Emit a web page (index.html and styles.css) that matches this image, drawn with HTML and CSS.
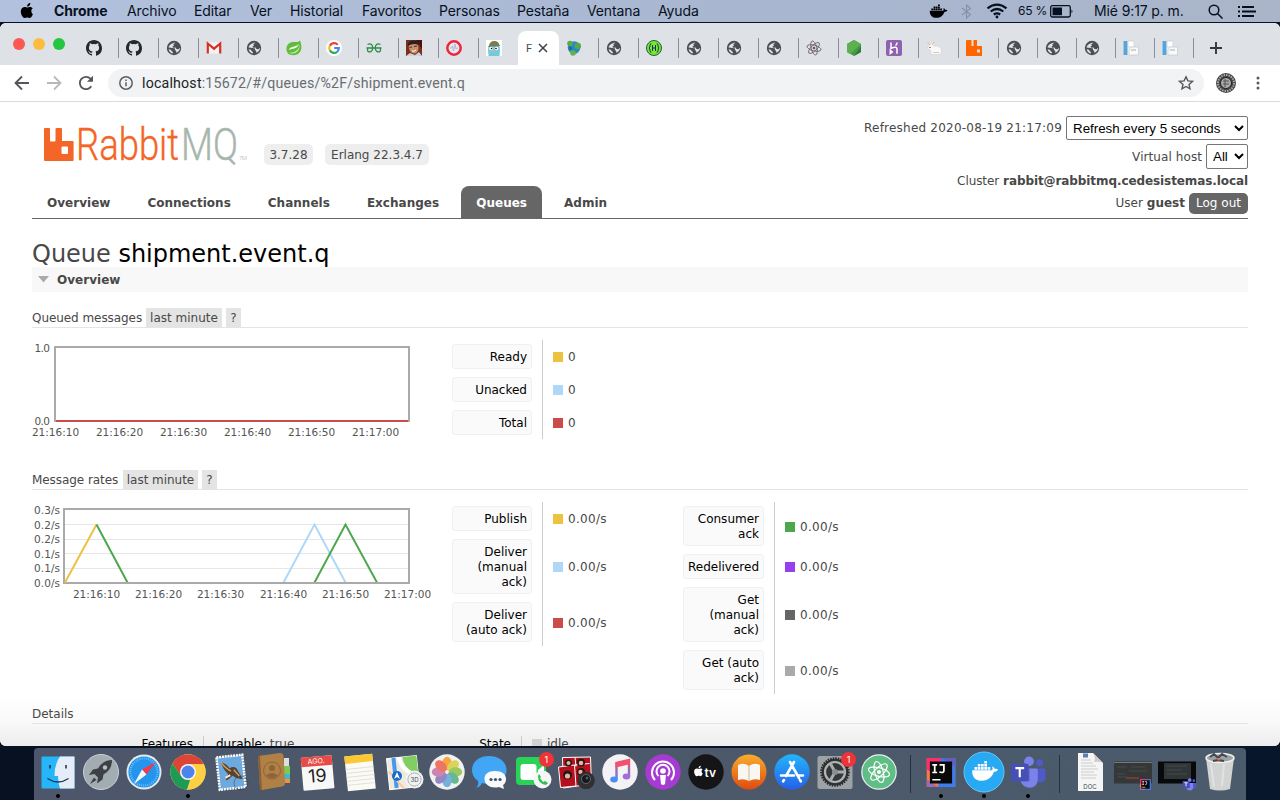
FILE: index.html
```html
<!DOCTYPE html>
<html lang="es">
<head>
<meta charset="utf-8">
<title>RabbitMQ Management</title>
<link rel="stylesheet" href="styles.css">
</head>
<body>
<svg class="defs" width="0" height="0">
  <symbol id="globe" viewBox="0 0 16 16"><circle cx="8" cy="8" r="7.200" fill="#4b4f53"/><path d="M9.500 2.800 7.200 4.300l.8 1.300-1.500.9.600 1.300 2.400-.2 1 1.500 2.300.2 1-1.200.4.500c-.6 2.400-2.200 3.800-4.100 4.200l.2-1.900-1.400-.9.2-1.400L6.500 7.900 2.600 7.500C3 5.200 6 2.600 9.500 2.800z" fill="#dee1e6"/><path d="M2.600 9.200 5 9.700l.7 1.600 1.300.8-.3 1.300C4.500 12.900 3 11.500 2.600 9.200z" fill="#dee1e6"/></symbol>
  <symbol id="github" viewBox="0 0 16 16"><path fill="#24292e" d="M8 0C3.580 0 0 3.580 0 8c0 3.540 2.290 6.530 5.470 7.590.4.070.55-.17.55-.38v-1.340c-2.230.48-2.700-1.070-2.700-1.070-.36-.92-.89-1.170-.89-1.170-.73-.5.05-.49.05-.49.81.06 1.230.83 1.230.83.72 1.230 1.880.87 2.340.67.07-.52.28-.87.51-1.070-1.780-.2-3.640-.89-3.640-3.950 0-.87.31-1.590.82-2.150-.08-.2-.36-1.020.08-2.120 0 0 .67-.21 2.200.82a7.600 7.600 0 0 1 4 0c1.530-1.040 2.200-.82 2.200-.82.44 1.100.16 1.920.08 2.120.51.56.82 1.270.82 2.150 0 3.070-1.870 3.750-3.650 3.950.29.25.54.73.54 1.480v2.200c0 .21.15.46.55.38A8 8 0 0 0 16 8c0-4.420-3.580-8-8-8z"/></symbol>
  <symbol id="page" viewBox="0 0 16 16"><path d="M.5 1h11v14H.5z" fill="#eef3f7"/><path d="M.5 1h4v14h-4z" fill="#55a5d6"/><path d="M5 1h6v6H5z" fill="#fff" stroke="#c5ccd2" stroke-width=".7"/><path d="M8 7h7.500v8H6V10z" fill="#fafafa" stroke="#c5c9cd" stroke-width=".7"/><path d="M8 10h5" stroke="#aaa"/></symbol>
  <symbol id="rabbit" viewBox="0 0 16 16"><path d="M1 0h4q.5 0 .5.500V6h2V.5Q7.500 0 8 0h2.500q.5 0 .5.500V6h4.500q.5 0 .5.500v9q0 .5-.5.500H.5q-.5 0-.5-.5V1Q0 0 1 0zM11 9.500v3h3v-3z" fill="#f60" fill-rule="evenodd"/></symbol>
  <symbol id="whale" viewBox="0 0 24 18"><path d="M1 8h17c.8-1 .6-2.300 0-3 1-.5 2 .5 2.300 1.800 1.200-.3 2.300 0 2.900.5-.6 1.500-2 2-3.500 2C18 14 14.500 17 9.500 17 4 17 .8 14 1 8zM3 5.200h2.300v2.200H3zM5.800 5.200h2.300v2.200H5.800zM8.600 5.200h2.300v2.200H8.600zM11.400 5.200h2.300v2.200h-2.300zM5.800 2.600h2.300v2.200H5.800zM8.600 2.600h2.300v2.200H8.600zM11.400 2.600h2.300v2.200h-2.300zM11.400 0h2.300v2.200h-2.300zM14.200 5.200h2.300v2.200h-2.300z"/></symbol>
  <symbol id="apple" viewBox="0 0 14 17"><path d="M11.300 9c0-1.700 1.400-2.600 1.500-2.700-.9-1.300-2.200-1.400-2.600-1.400-1.200-.1-2.200.7-2.800.7-.6 0-1.500-.7-2.400-.6C2.600 5 .8 6.500.8 9.500c0 3 2.200 6.500 3.900 6.500.9 0 1.300-.6 2.500-.6s1.500.6 2.500.6c1.500 0 2.900-2.700 3.300-3.900-.1 0-1.700-.8-1.700-3.100zM9.500 3.500C10 2.900 10.400 2 10.300 1 9.400 1 8.400 1.600 7.900 2.200c-.5.600-.9 1.500-.8 2.300.9.100 1.900-.4 2.400-1z"/></symbol>
  <symbol id="atomorbits" viewBox="-10 -10 20 20"><g fill="none" stroke="currentColor"><ellipse rx="9" ry="3.500" transform="rotate(15)"/><ellipse rx="9" ry="3.500" transform="rotate(75)"/><ellipse rx="9" ry="3.500" transform="rotate(135)"/></g><circle r="1.700" fill="currentColor"/></symbol>
  <symbol id="teams" viewBox="0 0 36 34"><circle cx="29.500" cy="7" r="3.600" fill="#5059c9"/><path d="M24 13h10q1.500 0 1.500 1.500V22c0 6-8 7-10 2z" fill="#5059c9"/><circle cx="18.500" cy="5.500" r="5" fill="#7b83eb"/><path d="M11 13h15q1.500 0 1.500 1.500V24c0 12-17 11-18 0z" fill="#7b83eb"/><path d="M12 13h7v13h-8z" fill="#5a62c3"/><rect y="8" width="18" height="18" rx="1.500" fill="#464eb8"/><path d="M4.500 12.500h9M9 12.500V22" stroke="#fff" stroke-width="2.200"/></symbol>
  <symbol id="idea" viewBox="0 0 30 30"><path d="M0 0h30v30H0z" fill="#f97a42"/><path d="M0 0h18L8 16 0 12z" fill="#fe2e6d"/><path d="M15 0h15v30H12z" fill="#3c7df2"/><path d="M15 0h15v9z" fill="#5f5fc8"/><path d="M0 22 12 30H0z" fill="#9b6bb5"/><path d="M3.500 3.500h23v23h-23z" fill="#090909"/><path d="M6 7h5M8.500 7v8M6 15h5M13.500 7H18v6q0 2-2 2t-2.500-1M6 22.500h8.500" fill="none" stroke="#fff" stroke-width="1.800"/></symbol>
</svg>

<header class="menubar">
  <svg class="apple-logo" width="14" height="17"><use href="#apple"/></svg>
  <nav class="menus"><b>Chrome</b><span>Archivo</span><span>Editar</span><span>Ver</span><span>Historial</span><span>Favoritos</span><span>Personas</span><span>Pestaña</span><span>Ventana</span><span>Ayuda</span></nav>
  <div class="status">
    <svg width="19" height="15"><use href="#whale"/></svg>
    <svg class="bluetooth" width="11" height="15" viewBox="0 0 11 15"><path d="M1 4 9.500 10.500 5.500 14V1l4 3.500L1 11"/></svg>
    <svg class="wifi" width="22" height="16" viewBox="0 0 22 16"><path d="M1.500 5.300q9.500-7.500 19 0M4.700 8.500q6.300-5 12.600 0M7.800 11.500q3.200-2.300 6.400 0"/><circle cx="11" cy="14" r="1.400"/></svg>
    <span class="percent">65 %</span>
    <svg class="battery" width="24" height="13" viewBox="0 0 24 13"><rect x=".7" y=".7" width="19.600" height="11.300" rx="1.800"/><path class="fill" d="M2.500 2.500h9.500v7.700H2.500zM21.500 4.500q2 1.800 0 3.700z"/></svg>
    <span class="clock">Mié 9:17 p. m.</span>
    <svg class="search" width="15" height="15" viewBox="0 0 15 15"><circle cx="6" cy="6" r="4.800"/><path d="m9.500 9.500 5 5"/></svg>
    <svg class="list" width="18" height="11" viewBox="0 0 18 11"><path d="M0 1h2M4 1h12M0 5.500h2M4 5.500h14M0 10h2M4 10h12"/></svg>
  </div>
</header>

<main class="window">
  <div class="tabstrip">
    <div class="lights"><i class="red"></i><i class="amber"></i><i class="green"></i></div>
    <div class="tab"><svg><use href="#github"/></svg></div>
    <div class="tab"><svg><use href="#github"/></svg></div>
    <div class="tab"><svg><use href="#globe"/></svg></div>
    <div class="tab"><svg viewBox="0 0 16 16"><path d="M1 2.500h14v11H1z" fill="#f3f3f3"/><path d="M1.800 13.500V3.500L8 8.700l6.200-5.200v10" fill="none" stroke="#d93025" stroke-width="2.200"/></svg></div>
    <div class="tab"><svg><use href="#globe"/></svg></div>
    <div class="tab"><svg viewBox="0 0 16 16"><path d="M14 .5c2 5 2 9-.5 12C11 16 4.500 15.800 2 13.500-1 9.500.5 4 4.500 2.500c3-1 7.500.5 9.500-2z" fill="#5fbd3a"/><path d="M3 12.800c5 .2 9.500-1.500 11-8.300C13.500 11 9 15 3 12.800zM2.800 10.300C4 5.500 10 8 13 3.500 11.500 9.500 7 8 2.800 10.300z" fill="#eef7e9"/></svg></div>
    <div class="tab"><svg viewBox="0 0 16 16"><circle cx="8" cy="8" r="8" fill="#fff"/><g fill="none" stroke-width="2.200"><path d="M11.700 4.700A4.800 4.800 0 0 0 3.800 5.800" stroke="#ea4335"/><path d="M3.800 5.800a4.800 4.800 0 0 0 0 4.500" stroke="#fbbc05"/><path d="M3.800 10.300a4.800 4.800 0 0 0 7.500 1.400" stroke="#34a853"/><path d="M11.300 11.700A4.800 4.800 0 0 0 12.800 8H8.200" stroke="#4285f4"/></g></svg></div>
    <div class="tab"><svg viewBox="0 0 16 16"><g fill="none" stroke="#2f8d46" stroke-width="1.300"><path d="M1.500 4.500C5 2.800 6.800 5 6.800 8s-2.800 5-5 3.200L1.200 8H8M14.500 4.500C11 2.800 9.200 5 9.200 8s2.800 5 5 3.200L14.800 8H8"/></g></svg></div>
    <div class="tab"><svg viewBox="0 0 16 16"><path d="M0 0h16v16H0z" fill="#7d2f1d"/><path d="M10 0h6v9z" fill="#4b120f"/><ellipse cx="7.500" cy="7.500" rx="4.800" ry="6.300" fill="#c9906c" transform="rotate(-15 7 7)"/><path d="M1.500 6Q2 .5 7.500.5T12.500 5Q8 2.500 1.500 6z" fill="#29211f"/><path d="M3.500 7.500 6 7M8 6.500 11 6" stroke="#40302c"/><path d="m0 16 4-3 5 2 4-3 3 4z" fill="#cbd2df"/><path d="M6 11q2 1 4-1" stroke="#fff" fill="none"/></svg></div>
    <div class="tab"><svg viewBox="0 0 16 16"><circle cx="8" cy="8" r="6.700" fill="#e5e8ef" stroke="#ef2440" stroke-width="2.500"/><path d="M4 8h1.500l1-2 1 5L9 4l1 5 1-1h1" fill="none" stroke="#a5b0ca" stroke-width=".8"/></svg></div>
    <div class="tab bare"><svg viewBox="0 0 16 16"><path d="M0 0h16v16H0z" fill="#fff"/><path d="M2.500 16 2 9q0-5 6-5t6 5l-.5 7z" fill="#6fcbdd"/><path d="M3 5.500Q4 .5 9 1q4 .5 4 3.500l1.500 1.500L2 7z" fill="#7b7b51"/><circle cx="5" cy="8.500" r="1.800" fill="#fff"/><circle cx="10.500" cy="8.500" r="1.800" fill="#fff"/><circle cx="5.500" cy="8.500" r=".8"/><circle cx="10" cy="8.500" r=".8"/><path d="M6.500 10.500h2.500v2H6.500z" fill="#d7b48a"/></svg></div>
    <div class="tab active"><span>F</span><svg viewBox="0 0 10 10"><path d="m1 1 8 8M9 1 1 9" stroke="#3c4043" stroke-width="1.500"/></svg></div>
    <div class="tab"><svg viewBox="0 0 16 16"><circle cx="8" cy="7.500" r="6.300" fill="#2588ce"/><circle cx="4" cy="3.500" r="2.800" fill="#5fa848"/><circle cx="11.800" cy="6" r="3.200" fill="#57a647"/><circle cx="7" cy="13" r="2.800" fill="#69b048"/><path d="M3 6.500 5.500 7 6 10 3.500 9.500z" fill="#1e6b72"/></svg></div>
    <div class="tab"><svg><use href="#globe"/></svg></div>
    <div class="tab"><svg viewBox="0 0 16 16"><circle cx="8" cy="8" r="7.500" fill="#79e53b" stroke="#265f36"/><path d="M5.300 3.500Q4 3.500 4 5.500T3 8q1 .5 1 2.500t1.300 2M10.700 3.500q1.300 0 1.300 2T13 8q-1 .5-1 2.500t-1.300 2M6.500 5v6M9.500 5v6M6.500 8h3" fill="none" stroke="#173647"/></svg></div>
    <div class="tab"><svg><use href="#globe"/></svg></div>
    <div class="tab"><svg><use href="#globe"/></svg></div>
    <div class="tab"><svg><use href="#globe"/></svg></div>
    <div class="tab atom"><svg><use href="#atomorbits"/></svg></div>
    <div class="tab"><svg viewBox="0 0 16 16"><path d="m8 0 7 4v8l-7 4-7-4V4z" fill="#469b43"/><path d="m8 0 7 4L4 14l-3-2V4z" fill="#5daf50"/><path d="m8 16 7-4V6z" fill="#2f7a38"/></svg></div>
    <div class="tab"><svg viewBox="0 0 16 16"><rect width="16" height="16" rx="2" fill="#8e62ae"/><path d="M5 2.500v5.700q6-2.200 6 .5v5M11 2.500q0 2-1.500 3M4.300 10.200v3.300l2-1.600z" fill="none" stroke="#fff" stroke-width="1.500"/></svg></div>
    <div class="tab"><svg viewBox="0 0 16 16"><path d="M.5 1.500Q3 1 4.800 4.500 6 1 8.500.8 9 4 7.500 6.500c4-1.500 8 .5 8 4.500q0 3.500-3 3.500H5.500q-1.500-1.500-.5-4-4.500-1-2.500-5z" fill="#faf9f8" stroke="#cfcac8" stroke-width=".5"/><path d="m2 2.500 2 3M7.800 2 6.300 5" stroke="#efa2a0"/><circle cx="4" cy="7.500" r=".6"/><path d="M7 12.500h6" stroke="#d0cdc3"/></svg></div>
    <div class="tab"><svg><use href="#rabbit"/></svg></div>
    <div class="tab slim"><svg><use href="#globe"/></svg></div>
    <div class="tab slim"><svg><use href="#globe"/></svg></div>
    <div class="tab slim"><svg><use href="#globe"/></svg></div>
    <div class="tab slim"><svg><use href="#page"/></svg></div>
    <div class="tab slim"><svg><use href="#page"/></svg></div>
    <svg class="newtab" viewBox="0 0 12 12"><path d="M6 0v12M0 6h12" stroke="#35383b" stroke-width="1.900"/></svg>
  </div>

  <div class="toolbar">
    <svg class="nav-icon" viewBox="0 0 16 16"><path d="M15 8H2M8 1.500 1.500 8 8 14.500"/></svg>
    <svg class="nav-icon dim" viewBox="0 0 16 16"><path d="M1 8h13M8 1.500 14.500 8 8 14.500"/></svg>
    <svg class="nav-icon" viewBox="0 0 16 16"><path d="M13.300 11.300A6.200 6.200 0 1 1 12.500 3.700L14 5.200"/><path class="solid" d="M15 .8v6H9z"/></svg>
    <div class="address">
      <svg class="info" viewBox="0 0 14 14"><circle cx="7" cy="7" r="6.200"/><path d="M7 6.200v4M7 3.500v1.600"/></svg>
      <span class="url"><b>localhost</b>:15672/#/queues/%2F/shipment.event.q</span>
      <svg class="star" viewBox="0 0 16 16"><path d="m8 1.800 1.900 4.100 4.500.5L11 9.400l1 4.400-4-2.300-4 2.300 1-4.400-3.400-3 4.500-.5z"/></svg>
    </div>
    <svg class="avatar" viewBox="0 0 22 22"><circle cx="11" cy="11" r="10" fill="#444"/><circle cx="11" cy="11" r="8" fill="none" stroke="#aaa" stroke-width="2" stroke-dasharray="1.500 1"/><circle cx="11" cy="11" r="5.500" fill="#aaa" stroke="#222"/><path d="M8 9h6M8 12h6M10 7v8" stroke="#555"/></svg>
    <svg class="dots" viewBox="0 0 4 14"><circle cx="2" cy="2" r="1.500"/><circle cx="2" cy="7" r="1.500"/><circle cx="2" cy="12" r="1.500"/></svg>
  </div>

  <div class="page">
    <header class="page-head">
      <div class="brand">
        <svg class="logo" width="216" height="54" viewBox="0 0 216 54">
          <path d="M13 5h4q1 0 1 1v11.500q0 1 1 1h3.500q1 0 1-1V6q0-1 1-1H29q1 0 1 1v12h10.600q1 0 1 1v18q0 1-1 1H13q-1 0-1-1V6q0-1 1-1zM29.500 24.500v5.500q0 1 1 1h4.500q1 0 1-1v-5.500q0-1-1-1h-4.500q-1 0-1 1z" fill="#f36627" fill-rule="evenodd"/>
          <text x="44" y="37" class="rabbit-word" textLength="103" lengthAdjust="spacingAndGlyphs">Rabbit</text>
          <text x="149" y="37" class="mq-word" textLength="57" lengthAdjust="spacingAndGlyphs">MQ</text>
          <text x="207" y="37" class="tm" textLength="8">TM</text>
        </svg>
        <span class="pill version">3.7.28</span><span class="pill erlang">Erlang 22.3.4.7</span>
      </div>
      <nav class="sections"><a>Overview</a><a>Connections</a><a>Channels</a><a>Exchanges</a><a class="current">Queues</a><a>Admin</a></nav>
      <div class="session">
        <div class="refresh"><span>Refreshed 2020-08-19 21:17:09</span><select class="sel-refresh"><option>Refresh every 5 seconds</option></select></div>
        <div class="vhost"><span>Virtual host</span><select class="sel-host"><option>All</option></select></div>
        <div class="cluster"><span>Cluster</span><b>rabbit@rabbitmq.cedesistemas.local</b></div>
        <div class="user"><span>User</span><b>guest</b><button>Log out</button></div>
      </div>
    </header>

    <h1>Queue <b>shipment.event.q</b></h1>
    <h2><svg width="11" height="7"><path d="M0 0h11L5.500 6.500z" fill="#aaa"/></svg><span>Overview</span></h2>

    <h3 class="h-queued"><span class="title">Queued messages</span><span class="chip">last minute</span><span class="chip help">?</span></h3>
    <section class="stats first">
      <svg class="chart" width="420" height="100" viewBox="32 340 420 100">
        <rect x="55" y="347" width="354" height="74"/>
        <path d="M56 421h352" stroke="#cb4b4b"/>
        <g class="ylab"><text x="50" y="352" textLength="15.500">1.0</text><text x="50" y="425" textLength="15.500">0.0</text></g>
        <g class="xlab"><text x="55.500" y="436">21:16:10</text><text x="119.500" y="436">21:16:20</text><text x="183.500" y="436">21:16:30</text><text x="247.500" y="436">21:16:40</text><text x="311.500" y="436">21:16:50</text><text x="375.500" y="436">21:17:00</text></g>
      </svg>
      <div class="legend">
        <div class="row"><span class="key">Ready</span><span class="val"><i class="gold"></i>0</span></div>
        <div class="row"><span class="key">Unacked</span><span class="val"><i class="sky"></i>0</span></div>
        <div class="row"><span class="key">Total</span><span class="val"><i class="crimson"></i>0</span></div>
      </div>
    </section>

    <h3 class="h-rates"><span class="title">Message rates</span><span class="chip">last minute</span><span class="chip help">?</span></h3>
    <section class="stats second">
      <svg class="chart" width="420" height="100" viewBox="32 502 420 100">
        <path class="grid" d="M65 524.500h343M65 539.500h343M65 553.500h343M65 568.500h343"/>
        <rect x="64" y="509" width="345" height="74"/>
        <path d="M65 582.500 96.500 524.500" stroke="#edc240"/>
        <path d="M96.500 524.500 127.500 582.500" stroke="#4da74d"/>
        <path d="M283.500 582.500 314.500 524.500 345.500 582.500" stroke="#afd8f8"/>
        <path d="M314.500 582.500 345.500 524.500 377 582.500" stroke="#4da74d"/>
        <path d="M96 583h313" stroke="#aaa"/>
        <g class="ylab"><text x="60" y="514" textLength="26">0.3/s</text><text x="60" y="529" textLength="26">0.2/s</text><text x="60" y="543" textLength="26">0.2/s</text><text x="60" y="558" textLength="26">0.1/s</text><text x="60" y="572" textLength="26">0.1/s</text><text x="60" y="587" textLength="26">0.0/s</text></g>
        <g class="xlab"><text x="96.500" y="598">21:16:10</text><text x="158.500" y="598">21:16:20</text><text x="220.500" y="598">21:16:30</text><text x="283.500" y="598">21:16:40</text><text x="345.500" y="598">21:16:50</text><text x="407.500" y="598">21:17:00</text></g>
      </svg>
      <div class="legend">
        <div class="row"><span class="key">Publish</span><span class="val"><i class="gold"></i>0.00/s</span></div>
        <div class="row"><span class="key">Deliver<br>(manual<br>ack)</span><span class="val"><i class="sky"></i>0.00/s</span></div>
        <div class="row"><span class="key">Deliver<br>(auto ack)</span><span class="val"><i class="crimson"></i>0.00/s</span></div>
      </div>
      <div class="legend wide">
        <div class="row"><span class="key">Consumer<br>ack</span><span class="val"><i class="leaf"></i>0.00/s</span></div>
        <div class="row"><span class="key">Redelivered</span><span class="val"><i class="violet"></i>0.00/s</span></div>
        <div class="row"><span class="key">Get<br>(manual<br>ack)</span><span class="val"><i class="dark"></i>0.00/s</span></div>
        <div class="row"><span class="key">Get (auto<br>ack)</span><span class="val"><i class="grey"></i>0.00/s</span></div>
      </div>
    </section>

    <h3 class="h-details"><span class="title">Details</span></h3>
    <div class="facts">
      <span class="fact-key">Features</span><span class="fact-val"><b>durable:</b> true</span>
      <span class="fact-key state">State</span><span class="fact-val"><i></i>idle</span>
    </div>
  </div>
</main>

<footer class="dock">
  <div class="app running"><svg viewBox="-21 -24 42 52"><rect x="-16.500" y="-15.500" width="33" height="32" rx="1" fill="#25b5f8"/><path d="M2-15.500h14.500v32H2Q0 11 0 4h-3.500Q-3.500-8 2-15.500z" fill="#e6edf8"/><path d="M-8-7v3.500M8-7v3.500" stroke="#152c4b" stroke-width="1.500"/><path d="M-10.500 6.500q10.500 7 21 0" fill="none" stroke="#17375c" stroke-width="1.300"/></svg></div>
  <div class="app"><svg viewBox="-21 -24 42 52"><circle r="17.500" fill="#a3adb1" stroke="#cbd2d5"/><path d="M11-12Q2-12-3-3.500l-5 1-4 5.500 5.500-1L-3 5.500l-1 6L1.500 7.500l1-5Q11-2 11-12z" fill="#3c4145"/><path d="m-7 5.500-4 6.500 6.500-4z" fill="#3c4145"/><circle cx="4" cy="-4.500" r="2.200" fill="#b9c0c3"/></svg></div>
  <div class="app"><svg viewBox="-21 -24 42 52"><circle r="17.500" fill="#e7eaed"/><circle r="15.600" fill="#2395ec"/><circle r="13.500" fill="none" stroke="#9cdaff" stroke-width="2" stroke-dasharray=".6 1.500"/><path d="M12-10 2.500 2.500l-4.500-5z" fill="#f5394b"/><path d="M-10 12-2-2.500l4.500 5z" fill="#f3f5f6"/></svg></div>
  <div class="app running"><svg viewBox="-21 -24 42 52"><circle r="17.700" fill="#fdcf45"/><path d="M-15.500-8.500A17.700 17.700 0 0 1 15.700-8L0-8l-7 12z" fill="#dc4438"/><path d="M-15.500-8.500-7 4 2 8-1 17.600A17.700 17.700 0 0 1-15.500-8.500z" fill="#1c9b57"/><path d="M-1 17.600 7 4 7-8h8.700A17.700 17.700 0 0 1-1 17.600z" fill="#fdcf45"/><circle r="8" fill="#f5f5f5"/><circle r="6.500" fill="#4b84ed"/></svg></div>
  <div class="app"><svg viewBox="-21 -24 42 52"><g transform="rotate(-6)"><rect x="-13" y="-16" width="26" height="32.500" fill="#6ea9de" stroke="#fff" stroke-width="2.500" stroke-dasharray="2 .8"/><path d="M-9-11Q-4-9-1-4 3-6 6-3q2 5 5 11-6 0-10-4-3 3-7 4 0-3 3-6Q-8-4-9-11z" fill="#59422f"/><path d="M-9-11Q-5-4 0-1M3-2l5 7" stroke="#c99c62" stroke-width="1.500" fill="none"/><path d="m-6 5 5-2" stroke="#efe7d8" stroke-width="2"/></g><circle cx="10" cy="11" r="7" fill="none" stroke="#31465c" opacity=".55"/></svg></div>
  <div class="app"><svg viewBox="-21 -24 42 52"><path d="M10-14h5v8h-5z" fill="#ddd"/><path d="M10-6h6v8h-6z" fill="#7ec954"/><path d="M10 2h6v5h-6z" fill="#46b7ca"/><path d="M10 7h6v4h-6z" fill="#e9953c"/><path d="m-16-16 22-3q3 0 3.500 3L11 11q0 3-3 3.500l-20 3.500q-2 0-2-2z" fill="#b08047"/><path d="m-16-16 2 32q0 2 2 2L-14-16z" fill="#8c5f31"/><circle cx="-2" cy="-1.500" r="8.500" fill="none" stroke="#8d6337"/><circle cx="-2" cy="-4" r="3" fill="#8d6337"/><path d="M-8 3.500q6-5 12 0-6 5-12 0z" fill="#8d6337"/></svg></div>
  <div class="app"><svg viewBox="-21 -24 42 52"><g transform="rotate(-5)"><rect x="-15" y="-15.500" width="31" height="33" rx="1" fill="#f8f8f8"/><path d="M-15-15.500h31v9.500h-31z" fill="#e84a46"/><text class="month" x="0" y="-8.500" text-anchor="middle">AGO.</text><text class="day" x="0" y="10" text-anchor="middle">19</text></g></svg></div>
  <div class="app"><svg viewBox="-21 -24 42 52"><g transform="rotate(-6)"><rect x="-14" y="-17" width="28" height="35" fill="#fbfaf5"/><path d="M-14-17h28v7.500h-28z" fill="#fac832"/><path d="M-14-4h28M-14 0h28M-14 4h28M-14 8h28M-14 12h28" stroke="#dedbd1" stroke-width=".8"/></g></svg></div>
  <div class="app"><svg viewBox="-21 -24 42 52"><g transform="rotate(-6)"><rect x="-16" y="-15" width="30" height="31" fill="#eeeade" stroke="#fff"/><path d="M0-15h14v18Q0-2 0-15z" fill="#82ce62"/><path d="M-4-15q3 16 18 20" fill="none" stroke="#fff" stroke-width="4"/><path d="M-9-15V15" stroke="#4598ed" stroke-width="4"/><path d="m-15-2 13 18" stroke="#fac8a4" stroke-width="2"/></g><circle cx="-7" cy="4" r="5" fill="#176cca"/><path d="m-7 0 3 7-3-2-3 2z" fill="#fff"/><circle cx="10.500" cy="7.500" r="9" fill="#f2f2f2"/><circle cx="10.500" cy="7.500" r="6.500" fill="none" stroke="#456" stroke-width=".8" stroke-dasharray="1 1"/><text class="mini" x="10.500" y="9.700" text-anchor="middle">3D</text></svg></div>
  <div class="app"><svg viewBox="-21 -24 42 52"><circle r="17.700" fill="#f1f1ef"/><g opacity=".88"><ellipse cy="-8.500" rx="4.700" ry="6.800" fill="#f99b27"/><ellipse cy="-8.500" rx="4.700" ry="6.800" fill="#d9d043" transform="rotate(45)"/><ellipse cy="-8.500" rx="4.700" ry="6.800" fill="#93c34c" transform="rotate(90)"/><ellipse cy="-8.500" rx="4.700" ry="6.800" fill="#51b286" transform="rotate(135)"/><ellipse cy="-8.500" rx="4.700" ry="6.800" fill="#65a9dc" transform="rotate(180)"/><ellipse cy="-8.500" rx="4.700" ry="6.800" fill="#8979bd" transform="rotate(225)"/><ellipse cy="-8.500" rx="4.700" ry="6.800" fill="#c776a9" transform="rotate(270)"/><ellipse cy="-8.500" rx="4.700" ry="6.800" fill="#ee6551" transform="rotate(315)"/></g></svg></div>
  <div class="app"><svg viewBox="-21 -24 42 52"><path d="M-1-16c10 0 17.500 6 17.500 14S9 12-1 12q-4 0-7-1-2 4.500-6 4.500 3-2.500 2-6.500-6-4-6-11c0-8 7-14 17-14z" fill="#42a6f6"/><path d="M5-1c7 0 11 3 11 8q0 4-3 6l1 4-5-2C1 17-5.500 13-5.500 7c0-5 3.500-8 10.500-8z" fill="#fafafa"/><g fill="#355577"><circle cx="1" cy="7.500" r="1.600"/><circle cx="5.500" cy="7.500" r="1.600"/><circle cx="10" cy="7.500" r="1.600"/></g></svg></div>
  <div class="app"><svg viewBox="-21 -24 42 52"><rect x="-17" y="-15" width="30" height="28" rx="4" fill="#2ad255"/><rect x="-12.500" y="-8" width="16" height="16" rx="3" fill="#fff"/><path d="m5-2 6-5V6L5 2z" fill="#fff"/><circle cx="9.500" cy="7.500" r="9" fill="#f4f5f4"/><path d="M5 4q0 8 8 9l2-2-3-2-2 1-3-4 1-1-2-3z" fill="#2cc253"/></svg><span class="badge">1</span></div>
  <div class="app"><svg viewBox="-21 -24 42 52"><path d="m-13.500-14.500 28-.5 1 27-28 4z" fill="#b80f1c" stroke="#fff"/><path d="m-17.500-5 16-2 1.500 21-15.500 1.500z" fill="#b80f1c" stroke="#fff"/><path d="m-1.500-7 15-1.500M-1-14.500l1 9" stroke="#fff"/><g fill="#241719"><circle cx="-7.500" cy="-9" r="3.500"/><circle cx="5" cy="-9.500" r="4"/><circle cx="-8.500" cy="3" r="4.500"/><circle cx="5" cy="0" r="4"/></g><g fill="#e6b39b"><circle cx="-7.500" cy="-9" r="2"/><circle cx="5" cy="-9" r="2.300"/><circle cx="-8.500" cy="4" r="2.600"/><circle cx="4.500" cy="0" r="2.200"/></g><circle cx="10" cy="8.500" r="8.800" fill="#303033"/><circle cx="10" cy="7" r="4.500" fill="#15171b" stroke="#66666a"/><circle cx="11" cy="6" r="1.500" fill="#4d5679"/></svg></div>
  <div class="app"><svg viewBox="-21 -24 42 52"><circle r="17.700" fill="#f3f3f6"/><path d="M-3.500 7V-9L9-12V4" fill="none" stroke="url(#note)" stroke-width="2.400"/><path d="m-4.500-9.500 14.500-3.300v5L-4.500-4.500z" fill="#f4506b"/><ellipse cx="-6" cy="7.500" rx="3.800" ry="3" fill="#4d8df3"/><ellipse cx="6.500" cy="4.500" rx="3.800" ry="3" fill="#a46bdd"/><defs><linearGradient id="note" x2="0" y2="1"><stop stop-color="#f4506b"/><stop offset="1" stop-color="#5685f0"/></linearGradient></defs></svg></div>
  <div class="app"><svg viewBox="-21 -24 42 52"><circle r="17.700" fill="#a63ad2"/><path d="M-8 8a11 11 0 1 1 16 0M-4.500 4a6.500 6.500 0 1 1 9 0" fill="none" stroke="#fff" stroke-width="2"/><circle cy="-1" r="2.800" fill="#fff"/><path d="M-3 3h6l-1 9q-2 2-4 0z" fill="#fff"/></svg></div>
  <div class="app"><svg viewBox="-21 -24 42 52"><circle r="17.700" fill="#151517"/><use href="#apple" x="-12.500" y="-7" width="10" height="12" fill="#fff"/><text class="tv" x="-1.500" y="4.500">tv</text></svg></div>
  <div class="app"><svg viewBox="-21 -24 42 52"><defs><linearGradient id="books" x2="0" y2="1"><stop stop-color="#f9ad2c"/><stop offset="1" stop-color="#df4b10"/></linearGradient></defs><circle r="17.500" fill="url(#books)"/><path d="M0-6Q-5-10-11-7V8q6-2 11 1 5-3 11-1V-7Q5-10 0-6z" fill="#faf7f2"/><path d="M0-6V9" stroke="#c8b6a2"/></svg></div>
  <div class="app"><svg viewBox="-21 -24 42 52"><defs><linearGradient id="store" x2="0" y2="1"><stop stop-color="#22b5fa"/><stop offset="1" stop-color="#2660ea"/></linearGradient></defs><circle r="17.700" fill="url(#store)"/><path d="M2-10-6 4M-2-10 7 6M-11 3.500H2M7 3.500h4M-8 8l-.8 1.300M8 8l.8 1.300" fill="none" stroke="#fff" stroke-width="2.600" stroke-linecap="round"/></svg></div>
  <div class="app"><svg viewBox="-21 -24 42 52"><rect x="-17.500" y="-16" width="35" height="33" rx="2" fill="#9da2a5"/><circle r="13.300" fill="#33383b" stroke="#282b2e" stroke-width="3" stroke-dasharray="1.500 1"/><circle r="10" fill="none" stroke="#b5b5b5" stroke-width="2.200"/><path d="M0 0-5-9M0 0-5 9M0 0h10" stroke="#a9abac" stroke-width="3"/><circle r="3" fill="#8b8e90"/></svg><span class="badge">1</span></div>
  <div class="app atom-app"><svg viewBox="-21 -24 42 52"><circle r="17.200" fill="#5fbd86" stroke="#e9efec" stroke-width="1.200"/><use href="#atomorbits" x="-12" y="-12" width="24" height="24"/></svg></div>
  <i class="divider"></i>
  <div class="app running"><svg viewBox="-21 -24 42 52"><use href="#idea" x="-14.500" y="-14" width="29" height="29"/></svg></div>
  <div class="app running"><svg viewBox="-21 -24 42 52"><circle r="20" fill="#27a9f3" stroke="#66c7f2"/><use href="#whale" x="-13.500" y="-11" width="29" height="21" fill="#fff"/></svg></div>
  <div class="app running"><svg viewBox="-21 -24 42 52"><use href="#teams" x="-17" y="-16.500" width="35" height="34"/></svg></div>
  <i class="divider"></i>
  <div class="app"><svg viewBox="-21 -24 42 52"><path d="M-12-19H3L13-9v28h-25z" fill="#f5f5f5"/><path d="M3-19q3 5 1 9 5-1 9 1z" fill="#ccc"/><path d="M-9-12h10M-9-9h12M-9-6h15M-9-3h17M-9 0h13M-9 3h16M-9 6h15" stroke="#bbb" stroke-width=".7"/><path d="M-7-18.500h5v4h-5z" fill="#5a7eb6"/><text class="mini doc" y="17" text-anchor="middle">DOC</text></svg></div>
  <div class="app"><svg viewBox="-21 -24 42 52"><rect x="-19" y="-10.500" width="38" height="22" fill="#343938"/><path d="M-19-9.500h38" stroke="#777"/><path d="M-16-5h10M-2-5h14M-4-1h18M-16 2h8M-16 5h10" stroke="#444c50"/><path d="M-7 6h13" stroke="#743b3b" stroke-width="2"/><use href="#idea" x="7" y="7" width="11" height="11"/></svg></div>
  <div class="app"><svg viewBox="-21 -24 42 52"><rect x="-19" y="-10.500" width="38" height="22" fill="#08090a"/><path d="M-13-9h27V7h-27z" fill="#303637"/><path d="M-10-6h20M-10-2h15M-10 2h20" stroke="#434b50"/><use href="#teams" x="5" y="6" width="15" height="13"/></svg></div>
  <div class="app"><svg viewBox="-21 -24 42 52"><path d="M-14-14h28l-4 31q-10 3-20 0z" fill="#d2d3d3"/><ellipse cy="-14" rx="14" ry="4.500" fill="#9ea2a4" stroke="#f0f0f0" stroke-width="1.500"/><path d="m-10-15 4-3 4 4 4-4 5 3M-7-11l5-1 6 1" stroke="#434950" fill="none" stroke-width="2"/><path d="m-9-8 3 23M4-8 2 14" stroke="#ececec" stroke-width="2" opacity=".6"/><path d="m-4-14 3 3 2-3" fill="#dd735c"/></svg></div>
</footer>
</body>
</html>
```

FILE: styles.css
```css
* { box-sizing: border-box; }
body {
  margin: 0;
  width: 1280px;
  height: 800px;
  overflow: hidden;
  display: flex;
  flex-direction: column;
  background: linear-gradient(90deg, #081122, #07162a);
  font-family: "DejaVu Sans", sans-serif;
}
i { font-style: normal; }
.defs { position: absolute; }

/* macOS menu bar */
.menubar {
  flex: none;
  height: 22px;
  margin-bottom: 1px;
  padding-left: 20px;
  display: flex;
  align-items: center;
  background: linear-gradient(90deg, #b2c1dd, #a8b6d0 60%, #aab5c9);
  color: #071020;
  font: 14px/22px Inter, sans-serif;
  letter-spacing: -.12px;
}
.apple-logo { margin: -2px 20px 0 0; }
.menus { display: grid; grid-template-columns: 73px 67px 56px 40px 72px 77px 78px 70px 71px 60px; }
.status { margin-left: auto; display: flex; align-items: center; width: 351px; }
.status svg { flex: none; }
.bluetooth { margin-left: 13px; fill: none; stroke: #8490a7; stroke-width: 1.100; }
.wifi { margin-left: 14px; fill: none; stroke: #071020; stroke-width: 2.200; }
.wifi circle { fill: #071020; stroke: none; }
.percent { width: 32px; margin-left: 10px; font-size: 12px; letter-spacing: -.2px; white-space: nowrap; }
.battery { fill: none; stroke: #071020; stroke-width: 1.300; }
.battery .fill { fill: #071020; stroke: none; }
.clock { width: 93px; margin-left: 20px; white-space: nowrap; }
.search { margin-left: 21px; fill: none; stroke: #071020; stroke-width: 1.500; }
.list { margin-left: 15px; stroke: #071020; stroke-width: 1.800; }

/* browser window */
.window {
  flex: none;
  height: 723px;
  display: flex;
  flex-direction: column;
  border-radius: 6px;
  overflow: hidden;
  background: #fff;
}
.tabstrip { flex: none; height: 42px; display: flex; background: #dee1e6; }
.lights { width: 79px; padding: 15px 0 0 13px; display: flex; gap: 8px; }
.lights i { width: 12px; height: 12px; border-radius: 50%; }
.lights .red { background: #fc5753; }
.lights .amber { background: #fdbc40; }
.lights .green { background: #22c73f; }
.tab {
  flex: none;
  width: 40px;
  height: 20px;
  margin-top: 15px;
  padding: 2px 0 0 7px;
  border-right: 1px solid #8b8e93;
}
.tab svg { display: block; width: 16px; height: 16px; }
.tab.slim { width: 39px; }
.tab.bare { width: 39px; border: 0; }
.tab.atom { color: #66595c; }
.tab.active {
  width: 41px;
  height: 34px;
  margin-top: 8px;
  padding: 0 0 0 8px;
  display: flex;
  align-items: center;
  border: 0;
  border-radius: 8px 8px 0 0;
  background: #fff;
  font: 11px Roboto, sans-serif;
  color: #45494d;
}
.tab.active span { width: 6px; }
.tab.active svg { width: 10px; height: 10px; margin-left: 6px; }
.newtab { width: 12px; height: 12px; margin: 19px 0 0 16px; }
.toolbar {
  flex: none;
  height: 37px;
  padding-left: 14px;
  display: flex;
  align-items: center;
  border-bottom: 1px solid #d9dbde;
}
.nav-icon { width: 16px; height: 16px; margin-right: 16px; fill: none; stroke: #53575b; stroke-width: 1.800; }
.nav-icon.dim { stroke: #b7b9bb; }
.nav-icon .solid { fill: #53575b; stroke: none; }
.address {
  width: 1096px;
  height: 28px;
  margin-left: -2px;
  padding: 0 10px 0 11px;
  display: flex;
  align-items: center;
  border-radius: 14px;
  background: #f1f3f4;
}
.info { width: 14px; height: 14px; fill: none; stroke: #5b5f63; stroke-width: 1.500; }
.url { margin-left: 9px; font: 14.200px Roboto, sans-serif; color: #696d71; letter-spacing: .19px; }
.url b { font-weight: 400; color: #202124; }
.star { width: 16px; height: 16px; margin-left: auto; fill: none; stroke: #55595d; stroke-width: 1.400; }
.avatar { width: 22px; height: 22px; margin-left: 11px; }
.dots { width: 4px; height: 14px; margin-left: 19px; fill: #55595d; }

/* management page */
.page {
  flex: 1;
  padding: 0 32px;
  background: linear-gradient(#fff 595px, #fafafa 617px, #ededed);
  color: #484848;
  font-size: 12px;
  line-height: 15px;
}
.page-head {
  height: 117px;
  display: grid;
  grid-template: 84px 32px / 720px 1fr;
  border-bottom: 1px solid #666;
}
.brand { display: flex; padding-top: 21px; }
.logo { flex: none; }
.rabbit-word, .mq-word { font: 300 44px Roboto, sans-serif; fill: #f36627; stroke: #f36627; stroke-width: .4; }
.mq-word { fill: #a8b6ae; stroke: #a8b6ae; }
.tm { font: 300 6px Roboto, sans-serif; fill: #a8b6ae; }
.pill { height: 21px; margin-top: 21px; line-height: 22px; text-align: center; border-radius: 5px; background: #eee; white-space: nowrap; }
.version { width: 49px; margin-left: 16px; }
.erlang { width: 104px; margin-left: 12px; }
.sections { grid-row: 2; display: flex; font-weight: 700; }
.sections a { margin-right: 7px; padding: 0 15px; line-height: 34px; height: 32px; letter-spacing: .02px; }
.sections .current { border-radius: 8px 8px 0 0; background: #666; color: #fff; }
.session { grid-row: 1 / 3; grid-column: 2; padding-top: 14px; display: flex; flex-direction: column; }
.session > div { display: flex; justify-content: flex-end; align-items: center; gap: 4px; white-space: nowrap; }
.refresh { height: 24px; margin-bottom: 4px; letter-spacing: .22px; }
.vhost { height: 25px; margin-bottom: 2px; letter-spacing: .08px; }
.cluster { height: 20px; letter-spacing: -.09px; }
.user { height: 22px; margin-top: 1px; }
.refresh span, .vhost span { padding-top: 1px; }
select { height: 24px; font: 13.333px "Liberation Sans", sans-serif; background: #fff; border: 1px solid #767676; border-radius: 2px; color: #000; }
.sel-refresh { width: 182px; padding-left: 2px; }
.sel-host { width: 42px; height: 25px; padding-left: 2px; }
.user button { width: 59px; height: 21px; padding: 0; border: 0; border-radius: 5px; background: #666; color: #fff; font: 12px "DejaVu Sans", sans-serif; }
h1 { height: 48px; margin: 0; padding-top: 20px; font-size: 24px; line-height: 30px; font-weight: 400; letter-spacing: -.01px; }
h1 b { font-weight: 400; color: #000; }
h2 { height: 25px; margin: 0; padding-left: 6px; display: flex; align-items: center; gap: 8px; background: #f8f8f8; font-size: 12px; letter-spacing: .02px; }
h2 span { padding-top: 2px; }
h3 { height: 20px; margin: 0; display: flex; gap: 4px; border-bottom: 1px solid #e4e4e4; font-size: 12px; font-weight: 400; line-height: 21px; }
.title, .chip { height: 19px; }
.chip { width: 76px; text-align: center; background: #e4e4e4; }
.chip.help { width: 15px; }
.h-queued { margin-top: 16px; }
.h-queued .title { width: 110px; white-space: nowrap; letter-spacing: -.06px; }
.h-rates .title { width: 87px; white-space: nowrap; letter-spacing: -.06px; }
.h-rates .chip:not(.help) { width: 75px; letter-spacing: -.04px; }
.stats { padding-top: 12px; display: flex; align-items: flex-start; }
.first { height: 142px; }
.second { height: 214px; }
.chart { flex: none; }
.chart rect { fill: none; stroke: #aaa; stroke-width: 2; }
.chart path { fill: none; stroke-width: 2; }
.chart .grid { stroke: #e6e6e6; stroke-width: 1; }
.chart text { font: 10.500px "DejaVu Sans", sans-serif; fill: #545454; }
.ylab { text-anchor: end; }
.xlab { text-anchor: middle; }
.legend { width: 231px; }
.row { display: flex; }
.key {
  width: 80px;
  margin: 4px 10px 4px 0;
  padding: 5px 4px 3px;
  border: 1px solid #f0f0f0;
  border-radius: 3px;
  background: #fafafa;
  color: #000;
  text-align: right;
}
.wide .key { width: 81px; }
.val { display: flex; align-items: center; padding: 2px 0 0 10px; border-left: 1px solid #ccc; letter-spacing: .3px; }
.val i { width: 10px; height: 10px; margin: -1px 5px 0 0; }
.gold { background: #edc240; }
.sky { background: #afd8f8; }
.crimson { background: #cb4b4b; }
.leaf { background: #4da74d; }
.violet { background: #9440ed; }
.dark { background: #666; }
.grey { background: #aaa; }
.facts { height: 22px; padding-top: 12px; display: flex; overflow: hidden; line-height: 17px; }
.fact-key { width: 161px; text-align: right; color: #000; }
.fact-key.state { width: 227px; }
.fact-val { width: 81px; margin-left: 10px; padding-left: 12px; border-left: 1px solid #ccc; white-space: nowrap; }
.fact-val b { font-weight: 400; color: #000; }
.fact-val i { display: inline-block; width: 10px; height: 10px; margin: 0 5px 0 -2px; background: #d2d2d2; vertical-align: -1px; }

/* dock */
.dock {
  width: 1212px;
  height: 52px;
  margin: 2px 0 0 34px;
  padding-left: 2.500px;
  display: flex;
  border-radius: 4px 4px 0 0;
  background: linear-gradient(90deg, #4d566a, #4b5b6b);
}
.app { position: relative; flex: none; width: 43.200px; height: 52px; }
.app > svg { display: block; width: 42px; height: 52px; margin: 0 auto; }
.running::after { content: ""; position: absolute; left: 19.500px; top: 46px; width: 4px; height: 4px; border-radius: 50%; background: #000; }
.divider { flex: none; width: 1px; height: 38px; margin: 7px 8.700px 0 9.700px; background: #25313f; }
.badge { position: absolute; top: 4px; right: 1px; width: 15px; height: 15px; border-radius: 50%; background: #ee3438; color: #fff; font: 9px/15px Inter, sans-serif; text-align: center; }
.month { font: 7px Inter, sans-serif; fill: #fff; }
.day { font: 18px Inter, sans-serif; fill: #222; }
.mini { font: 6px Inter, sans-serif; fill: #3f4b57; }
.tv { font: 600 12px Inter, sans-serif; fill: #fff; }
.atom-app { color: #fff; }
```
